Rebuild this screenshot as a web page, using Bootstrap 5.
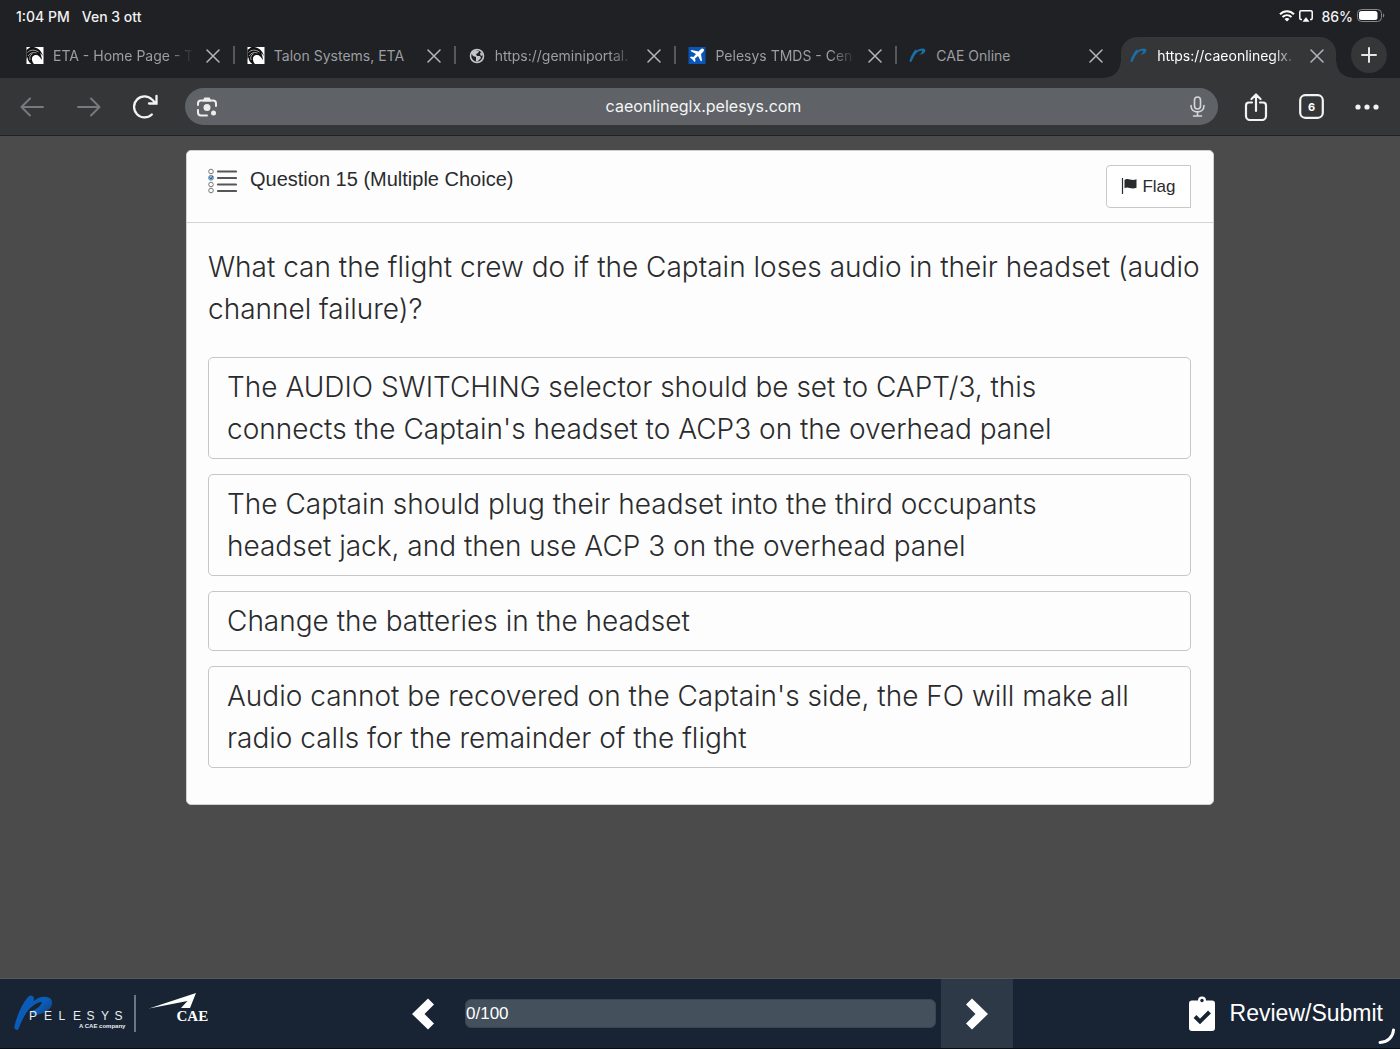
<!DOCTYPE html>
<html lang="en">
<head>
<meta charset="utf-8">
<meta name="viewport" content="width=device-width, initial-scale=1">
<title>CAE Online</title>
<link rel="stylesheet" href="https://cdn.jsdelivr.net/npm/bootstrap@5.3.0/dist/css/bootstrap.min.css">
<style>
  body { background: #4b4b4b; color: #2a2b2d; font-family: "Liberation Sans", Arial, sans-serif; }
  svg { display: block; flex: none; }
  button { color: inherit; }
  .plain-btn { background: none; border: 0; padding: 0; color: inherit; }
  .browser { background: #202124; color: #f1f2f3; font-family: Inter, "Liberation Sans", sans-serif; }
  .status-bar { height: 34px; font-size: 14px; font-weight: 500; padding: 0 15px 2px 16px; }
  .tab-strip { height: 44px; padding: 3px 13px 0 13px; }
  .tab { flex: 1 1 0; min-width: 0; height: 41px; padding: 0 14px 4px 13px; position: relative; color: #9b9ea2; font-size: 14px; }
  .tab a { color: inherit; flex: 1 1 0; min-width: 0; white-space: nowrap; margin: 0 12px 0 9px; }
  .tab a.fade-end { -webkit-mask-image: linear-gradient(90deg, #000 82%, transparent); mask-image: linear-gradient(90deg, #000 82%, transparent); }
  .tab-rule::after { content: ""; position: absolute; right: -1px; top: 9px; width: 2px; height: 18px; background: #55585c; }
  .tab-active { background: #353638; border-radius: 16px 16px 0 0; color: #fff; margin-left: 4px; padding-left: 9px; padding-right: 12px; }
  .tab-active::before, .tab-active::after { content: ""; position: absolute; bottom: 0; width: 16px; height: 16px; }
  .tab-active::before { left: -16px; background: radial-gradient(circle at 0 0, transparent 15px, #353638 16px); }
  .tab-active::after { right: -16px; background: radial-gradient(circle at 100% 0, transparent 15px, #353638 16px); }
  .new-tab { width: 36px; height: 36px; border-radius: 50%; background: #353638; margin-left: 15px; }
  .close-x { color: #b3b5b8; }
  .toolbar { height: 58px; background: #353638; border-bottom: 1px solid #202124; padding: 0 21px 0 19px; gap: 31px; }
  .address { height: 37px; border-radius: 19px; background: #5f6368; padding: 0 12px 0 11px; margin: 0 -5px; }
  .address input { background: none; border: 0; color: #f5f5f5; font-size: 16px; text-align: center; outline: 0; min-width: 0; padding-bottom: 3px; }
  .question { max-width: 1028px; background: #fdfdfd; border: 1px solid #d0d0d0; border-radius: 5px; padding-bottom: 36px; margin-top: 14px; }
  .question-head { height: 72px; padding: 14px 22px 0 21px; border-bottom: 1px solid #d3d3d3; }
  .question-head h1 { font-size: 20px; line-height: 24px; margin: 2px 0 0 13px; }
  .list-icon { margin-top: 3px; }
  .flag-btn { height: 43px; width: 85px; border: 1px solid #c8c8c8; border-radius: 4px 0 0 4px; background: #fff; font-size: 17px; }
  .question-body { padding: 23px 22px 0 21px; }
  .question-text, .answer { font-family: Inter, "Liberation Sans", sans-serif; font-weight: 300; font-size: 28px; line-height: 42px; }
  .question-text { margin: 0 -12px 27px 0; }
  .answers { gap: 15px; }
  .answer { background: #fdfdfd; border: 1px solid #c6c6c6; border-radius: 5px; padding: 8px 48px 8px 18px; text-align: left; color: inherit; }
  .footer-bar { height: 71px; background: #182433; border-top: 1px solid #55595d; border-bottom: 1px solid #080c14; color: #fff; position: relative; }
  .footer-side { flex: 1 1 0; min-width: 0; }
  .nav-group { width: 626px; }
  .nav-arrow { width: 72px; }
  .nav-next { background: #2e3947; }
  .score { height: 29px; background: #44505c; border: 1px solid #384450; border-radius: 6px; margin: 0 5px 0 6px; font-size: 17px; color: #fff; }
  .review { font-size: 23px; gap: 15px; padding-right: 17px; }
  .corner-arc { position: absolute; right: 4px; bottom: 3px; }
</style>
<script src="https://cdn.jsdelivr.net/npm/bootstrap@5.3.0/dist/js/bootstrap.bundle.min.js"></script>
</head>
<body class="d-flex flex-column min-vh-100">
<svg width="0" height="0" class="position-absolute" aria-hidden="true">
  <defs>
    <symbol id="x" viewBox="0 0 14 14"><path d="M1 1l12 12M13 1L1 13" stroke="currentColor" stroke-width="1.5" stroke-linecap="round"/></symbol>
    <symbol id="talon" viewBox="0 0 17 17"><path d="M0 0h17v17H0z" fill="#fff"/><path d="M0 3L4 0h3c5 1 8 4 9.500 9-1-1.500-2-2.500-3-3C15 9 15.500 11 15 13c-1-3-3-5-5.500-5C6.500 8 5 10.500 5.500 13c.2 1.500 1 3 2 4H5C2.500 15.500 1 13 1 10L0 12z" fill="#111"/><path d="M1 5.500C4 2.500 8 2.500 12 5M1.500 9C4 5.500 7 5 10 6M3.500 13C2.500 10 4 7.500 6 6.800" stroke="#fff" stroke-width=".6" fill="none"/></symbol>
    <symbol id="pel" viewBox="0 0 17 15"><path d="M0 13C1 9 3 5 5.500 2 6.500 1 7.500 1.500 7.200 3 10 .3 14 0 15.800 1.500c.8 2.500-2 5-6.300 5.300 2-1 3.300-2.500 3-4C10 2.500 7.500 4 5.800 6.500 4 9 3 11.500 2.200 13.300 1.500 14.500 0 14.300 0 13z" fill="#1c6ea4"/></symbol>
  </defs>
</svg>

<header class="browser">
  <div class="status-bar d-flex align-items-center justify-content-between">
    <div class="d-flex"><span>1:04 PM</span><span class="ms-2 ps-1">Ven 3 ott</span></div>
    <div class="d-flex align-items-center">
      <svg width="16" height="12" viewBox="0 0 16 12" fill="none" stroke="#fff" stroke-width="2"><path d="M1 4.300C5 .2 11 .2 15 4.300M3.500 7c2.600-2.500 6.400-2.500 9 0"/><path d="M8 11.500L5.500 9c1.500-1.300 3.500-1.300 5 0z" fill="#fff" stroke="none"/></svg>
      <svg class="ms-1" width="14" height="12" viewBox="0 0 14 12"><path d="M3 9.500H2A1.200 1.200 0 0 1 .8 8.300V2A1.200 1.200 0 0 1 2 .8h10A1.200 1.200 0 0 1 13.200 2v6.300A1.200 1.200 0 0 1 12 9.500h-1" fill="none" stroke="#fff" stroke-width="1.500"/><path d="M7 7.500l3 4H4z" fill="#fff" stroke="#fff" stroke-width=".5"/></svg>
      <span class="mx-1 ps-1">86%</span>
      <svg width="28" height="14" viewBox="0 0 28 14"><rect x=".5" y=".5" width="24" height="12" rx="4" fill="none" stroke="#85878a"/><rect x="2" y="2" width="18.500" height="9" rx="2.500" fill="#fff"/><path d="M26 4.500c1.800.8 1.800 3.200 0 4z" fill="#85878a"/></svg>
    </div>
  </div>

  <nav class="tab-strip d-flex align-items-start" aria-label="Tabs">
    <div class="tab tab-rule d-flex align-items-center">
      <svg width="18" height="17"><use href="#talon"/></svg>
      <a href="#" class="text-decoration-none fade-end">ETA - Home Page - T</a>
      <button class="plain-btn close-x" aria-label="Close"><svg width="14" height="14"><use href="#x"/></svg></button>
    </div>
    <div class="tab tab-rule d-flex align-items-center">
      <svg width="18" height="17"><use href="#talon"/></svg>
      <a href="#" class="text-decoration-none">Talon Systems, ETA</a>
      <button class="plain-btn close-x" aria-label="Close"><svg width="14" height="14"><use href="#x"/></svg></button>
    </div>
    <div class="tab tab-rule d-flex align-items-center">
      <svg width="18" height="16" viewBox="0 0 18 16"><circle cx="9" cy="8" r="6.500" fill="none" stroke="#c3c5c8" stroke-width="1.600"/><path d="M3 5l4-3 4 1-1 2-2 1 1 2h3l1 2-4 4-1-1V9L5 8zM13 4l2 3-2 1-1-2z" fill="#c3c5c8"/></svg>
      <a href="#" class="text-decoration-none fade-end">https://geminiportal.</a>
      <button class="plain-btn close-x" aria-label="Close"><svg width="14" height="14"><use href="#x"/></svg></button>
    </div>
    <div class="tab tab-rule d-flex align-items-center">
      <svg width="18" height="17" viewBox="0 0 17 17"><path d="M0 0h17v17H0z" fill="#0a55b8"/><path d="M15 2c-1-1-2-.5-3 .5L10 4.500 3 3 2 4l5.500 3L5 10l-2.500-.5-1 1L4 12.500 6 15l1-1-.5-2.500L9.500 9l3 5.500 1-1L12.500 7l2-2c1-1 1.300-2.300.5-3z" fill="#fff"/></svg>
      <a href="#" class="text-decoration-none fade-end">Pelesys TMDS - Cen</a>
      <button class="plain-btn close-x" aria-label="Close"><svg width="14" height="14"><use href="#x"/></svg></button>
    </div>
    <div class="tab d-flex align-items-center">
      <svg width="18" height="15"><use href="#pel"/></svg>
      <a href="#" class="text-decoration-none">CAE Online</a>
      <button class="plain-btn close-x" aria-label="Close"><svg width="14" height="14"><use href="#x"/></svg></button>
    </div>
    <div class="tab tab-active d-flex align-items-center">
      <svg width="18" height="15"><use href="#pel"/></svg>
      <a href="#" class="text-decoration-none fade-end" aria-current="page">https://caeonlineglx.</a>
      <button class="plain-btn close-x" aria-label="Close"><svg width="14" height="14"><use href="#x"/></svg></button>
    </div>
    <button class="plain-btn new-tab d-flex align-items-center justify-content-center" aria-label="New tab"><svg width="16" height="16" viewBox="0 0 16 16"><path d="M8 1v14M1 8h14" stroke="#e4e5e6" stroke-width="2" stroke-linecap="round"/></svg></button>
  </nav>

  <div class="toolbar d-flex align-items-center">
    <button class="plain-btn" aria-label="Back"><svg width="26" height="20" viewBox="0 0 26 20"><path d="M24 10H3M11 1.500L2.500 10l8.500 8.500" fill="none" stroke="#77797c" stroke-width="2" stroke-linecap="round" stroke-linejoin="round"/></svg></button>
    <button class="plain-btn" aria-label="Forward"><svg width="26" height="20" viewBox="0 0 26 20"><path d="M2 10h21M15 1.500l8.500 8.500-8.500 8.500" fill="none" stroke="#77797c" stroke-width="2" stroke-linecap="round" stroke-linejoin="round"/></svg></button>
    <button class="plain-btn" aria-label="Reload"><svg width="26" height="26" viewBox="0 0 26 26"><path d="M18.800 20.500A10.500 10.500 0 1 1 19 5.500l3.500 3.500M23.500 2v7.500h-7.500" fill="none" stroke="#f3f3f3" stroke-width="2.300" stroke-linecap="round"/></svg></button>
    <div class="address d-flex align-items-center flex-grow-1">
      <svg width="22" height="20" viewBox="0 0 22 20" fill="none" stroke="#eceded" stroke-width="2" stroke-linecap="round"><path d="M2 8V6.500A3 3 0 0 1 5 3.500h12a3 3 0 0 1 3 3V9M2 13v2.500a3 3 0 0 0 3 3h6"/><path d="M8 3.500L9 1.500h4l1 2z" fill="#eceded"/><circle cx="11" cy="10.500" r="3.500" fill="#eceded" stroke="none"/><circle cx="17.500" cy="16" r="2.500" fill="#eceded" stroke="none"/></svg>
      <input class="flex-grow-1" type="text" aria-label="Address" value="caeonlineglx.pelesys.com">
      <button class="plain-btn" aria-label="Voice search"><svg width="17" height="21" viewBox="0 0 17 21" fill="none" stroke="#d5d7d9" stroke-width="1.600" stroke-linecap="round"><rect x="5.500" y="1" width="6" height="12" rx="3"/><path d="M2 9.500c0 8.500 13 8.500 13 0M8.500 16v4M4.500 20h8"/></svg></button>
    </div>
    <button class="plain-btn" aria-label="Share"><svg width="24" height="28" viewBox="0 0 24 28" fill="none" stroke="#f3f3f3" stroke-width="2.200" stroke-linecap="round" stroke-linejoin="round"><path d="M8 9.500H5a3 3 0 0 0-3 3V23a4 4 0 0 0 4 4h12a4 4 0 0 0 4-4V12.500a3 3 0 0 0-3-3h-3M12 18V2M7.500 6L12 1.500 16.500 6"/></svg></button>
    <button class="plain-btn" aria-label="6 tabs"><svg width="25" height="25" viewBox="0 0 25 25"><rect x="1.200" y="1.200" width="22.600" height="22.600" rx="5" fill="none" stroke="#f3f3f3" stroke-width="2.200"/><text x="12.500" y="16.500" text-anchor="middle" font-size="11" font-weight="700" fill="#fff">6</text></svg></button>
    <button class="plain-btn" aria-label="More"><svg width="24" height="6" viewBox="0 0 24 6" fill="#f3f3f3"><circle cx="3" cy="3" r="2.600"/><circle cx="12" cy="3" r="2.600"/><circle cx="21" cy="3" r="2.600"/></svg></button>
  </div>
</header>

<main class="flex-grow-1">
  <section class="question mx-auto">
    <div class="question-head d-flex align-items-start">
      <svg class="list-icon" width="29" height="26" viewBox="0 0 29 26"><g fill="none" stroke="#777"><circle cx="3" cy="3.500" r="2.300"/><circle cx="3" cy="16.500" r="2.300"/><circle cx="3" cy="22.500" r="2.300"/></g><circle cx="3" cy="9.800" r="2.500" fill="#7db4ea" stroke="#777" stroke-width=".7"/><path d="M1.500 9.500l1.500 1.500 2-3" stroke="#235f9f" fill="none"/><path d="M10 3.500h18M10 10h18M10 16.500h18M10 23h18" stroke="#55565a" stroke-width="2.200" stroke-linecap="round"/></svg>
      <h1 class="fw-normal">Question 15 (Multiple Choice)</h1>
      <button class="flag-btn ms-auto d-flex align-items-center justify-content-center p-0"><svg class="me-1" width="17" height="17" viewBox="0 0 17 17"><path d="M1.500 0v16" stroke="#2a2b2d" stroke-width="1.200"/><path d="M3.500 2c4-3 6 1.500 12-.8v8.500c-6 2.300-8-2-12 .5z" fill="#2a2b2d"/></svg>Flag</button>
    </div>
    <div class="question-body">
      <p class="question-text">What can the flight crew do if the Captain loses audio in their headset (audio channel failure)?</p>
      <div class="answers d-flex flex-column">
        <button class="answer">The AUDIO SWITCHING selector should be set to CAPT/3, this connects the Captain's headset to ACP3 on the overhead panel</button>
        <button class="answer">The Captain should plug their headset into the third occupants headset jack, and then use ACP 3 on the overhead panel</button>
        <button class="answer">Change the batteries in the headset</button>
        <button class="answer">Audio cannot be recovered on the Captain's side, the FO will make all radio calls for the remainder of the flight</button>
      </div>
    </div>
  </section>
</main>

<footer class="footer-bar d-flex align-items-stretch">
  <div class="footer-side d-flex align-items-center">
    <svg width="215" height="56" viewBox="0 0 215 56" role="img" aria-label="Pelesys, a CAE company">
      <defs><linearGradient id="blue" x1="0" y1="0" x2="1" y2="1"><stop offset=".5" stop-color="#0b5cb8"/><stop offset=".85" stop-color="#15365e"/></linearGradient></defs>
      <path d="M14.500 40C17 29 22 18 28.500 10.500c2-2 5-1 5.500 1.500l-.5 3.500C38 10.500 46 9 51 13c4 7-3 14-15 16-3-.5-5-2-5-4 5-1 10-5 11-9-6 0-13 6-17 13-3 5-5 10-6.500 14-1.500 2.500-5 0-4-3z" fill="url(#blue)"/>
      <g fill="#e8edf2" font-family="Liberation Sans, sans-serif" font-size="12"><text x="29 44 58.500 73 86.500 101 114.500" y="34">PELESYS</text><text x="79" y="42" font-size="6" font-weight="700">A CAE company</text></g>
      <path d="M135 9v37" stroke="#8b939c" stroke-width="1.500"/>
      <path d="M149 22.500L196 7l-6 15h-9l6.500-7z" fill="#fff"/>
      <text x="176.500" y="35" font-family="Liberation Serif, serif" font-size="15" font-weight="700" fill="#fff">CAE</text>
    </svg>
  </div>
  <div class="nav-group d-flex align-items-stretch">
    <button class="plain-btn nav-arrow d-flex align-items-center justify-content-center" aria-label="Previous"><svg width="24" height="32" viewBox="0 0 24 32"><path d="M17 .5l6 6L13.500 16l9.500 9.500-6 6L1 16z" fill="#fff"/></svg></button>
    <div class="score d-flex align-items-center flex-grow-1 align-self-center" role="progressbar" aria-valuenow="0" aria-valuemin="0" aria-valuemax="100">0/100</div>
    <button class="plain-btn nav-arrow nav-next d-flex align-items-center justify-content-center" aria-label="Next"><svg width="24" height="32" viewBox="0 0 24 32"><path d="M7 .5l-6 6 9.500 9.500L1 25.500l6 6L23 16z" fill="#fff"/></svg></button>
  </div>
  <div class="footer-side d-flex align-items-center justify-content-end">
    <button class="plain-btn review d-flex align-items-center"><svg width="26" height="35" viewBox="0 0 26 35"><path d="M3 4.500h6a4 4 0 0 1 8 0h6a3 3 0 0 1 3 3V32a3 3 0 0 1-3 3H3a3 3 0 0 1-3-3V7.500a3 3 0 0 1 3-3z" fill="#fff"/><circle cx="13" cy="4.500" r="1.700" fill="#182433"/><path d="M6 20.500l5 5 9.500-9.500" fill="none" stroke="#182433" stroke-width="4"/></svg>Review/Submit</button>
  </div>
  <svg class="corner-arc" width="18" height="17" viewBox="0 0 18 17"><path d="M15.500 2C15 9 10 14 2 14.500" fill="none" stroke="#fff" stroke-width="3" stroke-linecap="round"/></svg>
</footer>
</body>
</html>
